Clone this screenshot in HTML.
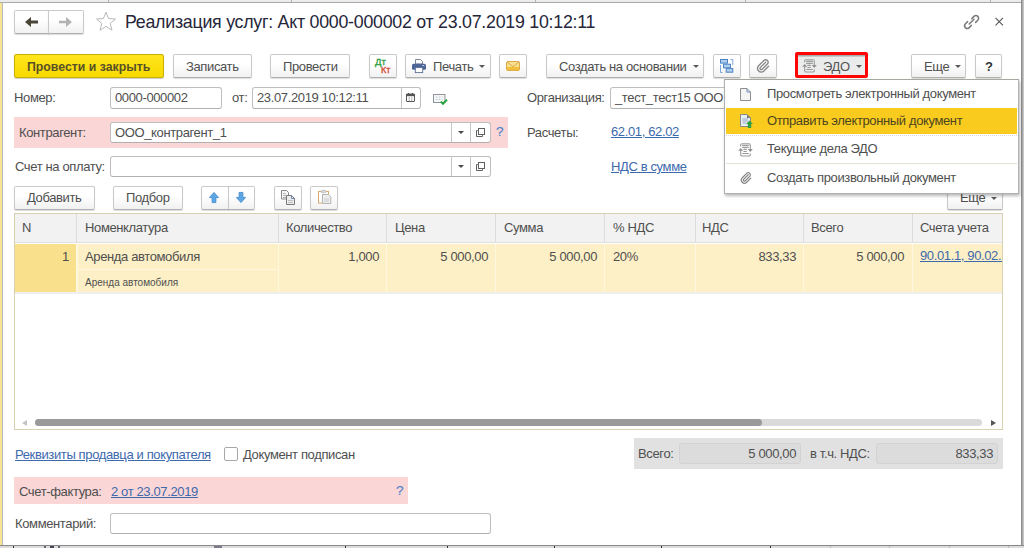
<!DOCTYPE html>
<html><head><meta charset="utf-8">
<style>
*{box-sizing:border-box;margin:0;padding:0}
html,body{width:1024px;height:548px;overflow:hidden;background:#fff}
body{position:relative;font-family:"Liberation Sans",sans-serif;font-size:13px;letter-spacing:-0.37px;color:#4f4f4f}
.a{position:absolute}
svg.a{overflow:visible}
.t{position:absolute;line-height:14px;white-space:nowrap}
.btn{position:absolute;height:23px;border:1px solid #c9c9c9;border-bottom-color:#b0b0b0;border-radius:2px;background:linear-gradient(#ffffff 40%,#f1f1f1);box-shadow:0 1px 1px rgba(0,0,0,.14)}
.inp{position:absolute;height:21px;border:1px solid #bfbfbf;border-bottom-color:#b0b0b0;border-radius:3px;background:#fff}
.lnk{color:#3d69ad;text-decoration:underline;text-underline-offset:1px}
.vd{position:absolute;width:1px;background:#dcdcdc}
.rd{position:absolute;width:1px;top:244px;height:48px;background:#fff7de}
</style></head><body>
<!-- top band -->
<div class="a" style="left:0;top:0;width:1024px;height:3px;background:#ececec;border-bottom:1px solid #a9a9a9"></div>
<div class="a" style="left:108px;top:0;width:1px;height:2px;background:#b4b4b4"></div>
<div class="a" style="left:291px;top:0;width:1px;height:2px;background:#b4b4b4"></div>
<div class="a" style="left:535px;top:0;width:1px;height:2px;background:#b4b4b4"></div>
<div class="a" style="left:745px;top:0;width:1px;height:2px;background:#b4b4b4"></div>
<div class="a" style="left:990px;top:0;width:1px;height:2px;background:#b4b4b4"></div>
<!-- left strip -->
<div class="a" style="left:0;top:3px;width:2px;height:542px;background:#f8e495"></div>
<div class="a" style="left:2px;top:2px;width:1px;height:543px;background:#b8b8b8"></div>
<!-- right border -->
<div class="a" style="left:1021px;top:0;width:1px;height:548px;background:#8e8e8e"></div>
<div class="a" style="left:1022px;top:0;width:1px;height:548px;background:#a9a9a9"></div>
<div class="a" style="left:1023px;top:0;width:1px;height:548px;background:#c6c6c6"></div>
<!-- bottom border -->
<div class="a" style="left:0;top:545px;width:1024px;height:1px;background:#8a8a8a"></div>
<div class="a" style="left:0;top:546px;width:1024px;height:2px;background:#dcdcdc"></div>
<div class="a" style="left:13px;top:546px;width:1px;height:2px;background:#333"></div>
<div class="a" style="left:44px;top:546px;width:2px;height:2px;background:#667"></div><div class="a" style="left:50px;top:546px;width:4px;height:2px;background:#445"></div><div class="a" style="left:58px;top:546px;width:2px;height:2px;background:#667"></div>
<div class="a" style="left:214px;top:546px;width:8px;height:2px;background:#7a7a88"></div>
<div class="a" style="left:345px;top:546px;width:1px;height:2px;background:#333"></div>
<div class="a" style="left:447px;top:546px;width:1px;height:2px;background:#333"></div>
<div class="a" style="left:554px;top:546px;width:1px;height:2px;background:#333"></div>
<div class="a" style="left:661px;top:546px;width:1px;height:2px;background:#333"></div>
<div class="a" style="left:770px;top:546px;width:1px;height:2px;background:#333"></div>
<div class="a" style="left:830px;top:546px;width:1px;height:2px;background:#bbb"></div>
<div class="a" style="left:889px;top:546px;width:1px;height:2px;background:#bbb"></div>
<div class="a" style="left:949px;top:546px;width:1px;height:2px;background:#bbb"></div>
<div class="a" style="left:1008px;top:546px;width:1px;height:2px;background:#bbb"></div>

<!-- nav buttons -->
<div class="btn" style="left:14px;top:10px;width:35px;height:24px;border-radius:2px 0 0 2px"></div>
<div class="btn" style="left:48px;top:10px;width:36px;height:24px;border-radius:0 2px 2px 0"></div>
<svg class="a" style="left:25px;top:17px" width="13" height="10" viewBox="0 0 13 10"><path d="M0 5 L6 0 V3.6 H13 V6.4 H6 V10 Z" fill="#4a4538"/></svg>
<svg class="a" style="left:59px;top:17px" width="13" height="10" viewBox="0 0 13 10"><path d="M13 5 L7 0 V3.8 H0 V6.2 H7 V10 Z" fill="#b3b3b3"/></svg>
<!-- star -->
<svg class="a" style="left:95px;top:11px" width="22" height="21" viewBox="0 0 22 21"><path d="M11 1.2 L13.6 7.6 L20.5 8 L15.2 12.4 L17 19.2 L11 15.4 L5 19.2 L6.8 12.4 L1.5 8 L8.4 7.6 Z" fill="none" stroke="#b8b8b8" stroke-width="1"/></svg>
<div class="t" style="left:125px;top:11.6px;font-size:17.8px;letter-spacing:-0.25px;line-height:20px;color:#26263a">Реализация услуг: Акт 0000-000002 от 23.07.2019 10:12:11</div>
<!-- link & close -->
<svg class="a" style="left:963px;top:14px" width="18" height="16" viewBox="0 0 18 16"><g fill="none" stroke="#7a7a7a" stroke-width="1.5" stroke-linecap="round"><path d="M8.8 4.6 L11 2.4 A2.6 2.6 0 0 1 14.8 6.2 L12.6 8.4"/><path d="M8.4 11.4 L6.2 13.6 A2.6 2.6 0 0 1 2.4 9.8 L4.6 7.6"/><path d="M6.2 10 L11 5.2"/></g></svg>
<svg class="a" style="left:995px;top:17px" width="9" height="9" viewBox="0 0 9 9"><path d="M0.5 0.8 L8 8.3 M8 0.8 L0.5 8.3" stroke="#555" stroke-width="1.1"/></svg>

<!-- toolbar -->
<div class="a" style="left:14px;top:54px;width:150px;height:24px;border:1px solid #cbb000;border-radius:2px;background:linear-gradient(#ffe51c,#f8da00);box-shadow:0 1px 1px rgba(0,0,0,.2)"></div>
<div class="t" style="left:27px;top:60px;font-weight:bold;color:#585026;font-size:12.3px;letter-spacing:normal">Провести и закрыть</div>
<div class="btn" style="left:173px;top:54px;width:79px;height:24px"></div>
<div class="t" style="left:186px;top:60px">Записать</div>
<div class="btn" style="left:270px;top:54px;width:80px;height:24px"></div>
<div class="t" style="left:283px;top:60px">Провести</div>
<div class="btn" style="left:369px;top:54px;width:28px;height:24px"></div>
<div class="t" style="left:375px;top:57px;font-size:9.5px;letter-spacing:normal;line-height:10px;color:#2a9d3a;-webkit-text-stroke:0.3px #2a9d3a">Дт</div>
<div class="t" style="left:381px;top:65px;font-size:9px;letter-spacing:normal;line-height:10px;color:#d0452c;-webkit-text-stroke:0.3px #d0452c">Кт</div>
<div class="btn" style="left:405px;top:54px;width:86px;height:24px"></div>
<svg class="a" style="left:412px;top:59px" width="14" height="14" viewBox="0 0 14 14"><path d="M3.5 0.5 H8.5 L10.5 2.5 V5 H3.5 Z" fill="#fff" stroke="#707a8a" stroke-width="0.9"/><rect x="0" y="4.8" width="14" height="6" rx="1.6" fill="#4d6696"/><rect x="3.3" y="8.6" width="7.4" height="5" fill="#fff" stroke="#5a6e95" stroke-width="0.9"/><rect x="10.2" y="6" width="2" height="1" fill="#b9c6e0"/></svg>
<div class="t" style="left:433px;top:60px">Печать</div>
<svg class="a" style="left:479px;top:65px" width="6" height="3"><path d="M0 0 H6 L3 3 Z" fill="#5a5a5a"/></svg>
<div class="btn" style="left:499px;top:54px;width:28px;height:24px"></div>
<svg class="a" style="left:506px;top:61px" width="14" height="10" viewBox="0 0 14 10"><rect x="0.5" y="0.5" width="13" height="9" rx="1.5" fill="#f9e08e" stroke="#dfa84a"/><rect x="1" y="6" width="12" height="3" fill="#f0c038"/><path d="M1 1 L7 5.8 L13 1" fill="none" stroke="#d9a048" stroke-width="0.9"/></svg>
<div class="btn" style="left:546px;top:54px;width:158px;height:24px"></div>
<div class="t" style="left:559px;top:60px">Создать на основании</div>
<svg class="a" style="left:693px;top:65px" width="6" height="3"><path d="M0 0 H6 L3 3 Z" fill="#5a5a5a"/></svg>
<div class="btn" style="left:713px;top:54px;width:28px;height:24px"></div>
<svg class="a" style="left:720px;top:59px" width="14" height="14" viewBox="0 0 14 14"><g fill="#b3cff0" stroke="#4a82c4" stroke-width="1"><rect x="0.5" y="0.5" width="7" height="3.6"/><rect x="3.5" y="5.2" width="7" height="3.6"/><rect x="6.2" y="9.6" width="6.6" height="3.6"/></g><path d="M0.5 6 V13.5 H2.5 M10.5 0.5 H12.8 V6" fill="none" stroke="#6d9bd6" stroke-width="0.9"/></svg>
<div class="btn" style="left:749px;top:54px;width:28px;height:24px"></div>
<svg class="a" style="left:756px;top:59px" width="14" height="14" viewBox="0 0 14 14"><path d="M9.6 3.2 L4.2 8.6 A1.3 1.3 0 0 0 6 10.4 L11.6 4.8 A2.5 2.5 0 0 0 8.1 1.3 L2.4 7 A3.7 3.7 0 0 0 7.6 12.2 L12.6 7.2" fill="none" stroke="#858585" stroke-width="1.3" stroke-linecap="round"/></svg>
<!-- EDO -->
<div class="a" style="left:795px;top:52px;width:73px;height:26px;border:3px solid #ff0606;border-radius:2px;background:linear-gradient(#e9eaea,#ededed);box-shadow:inset 0 1px 0 #a9abab,inset 0 2px 0 #c8caca"></div>
<svg class="a" style="left:802px;top:59px" width="15" height="14" viewBox="0 0 15 14"><g fill="none" stroke="#9a9a9a" stroke-width="1.1"><path d="M2.7 3.4 V2 A1.3 1.3 0 0 1 4 0.7 H11 A1.3 1.3 0 0 1 12.3 2 V6.3"/><path d="M12.3 10.4 V11.7 A1.3 1.3 0 0 1 11 13 H4 A1.3 1.3 0 0 1 2.7 11.7 V7.6"/><path d="M4.2 2.4 H10.8 M4.2 4.4 H10.8 M5.4 6.4 H8.8 M5.4 8.5 H8.8 M4.2 10.5 H10.8"/></g><path d="M0.2 7.8 L2.7 5 L5.2 7.8 Z M9.8 6.1 L12.3 8.9 L14.8 6.1 Z" fill="#8e8e8e"/></svg>
<div class="t" style="left:823px;top:60px;color:#555">ЭДО</div>
<svg class="a" style="left:856px;top:65px" width="6" height="3"><path d="M0 0 H6 L3 3 Z" fill="#5a5a5a"/></svg>
<div class="btn" style="left:911px;top:54px;width:55px;height:24px"></div>
<div class="t" style="left:924px;top:60px">Еще</div>
<svg class="a" style="left:955px;top:65px" width="6" height="3"><path d="M0 0 H6 L3 3 Z" fill="#5a5a5a"/></svg>
<div class="btn" style="left:975px;top:54px;width:27px;height:24px"></div>
<div class="t" style="left:985px;top:60px;font-weight:bold;color:#333;font-size:13px;letter-spacing:normal">?</div>

<!-- row Номер -->
<div class="t" style="left:14px;top:91px">Номер:</div>
<div class="inp" style="left:110px;top:87px;width:112px;height:22px"></div>
<div class="t" style="left:115px;top:91px">0000-000002</div>
<div class="t" style="left:232px;top:91px">от:</div>
<div class="inp" style="left:252px;top:87px;width:169px;height:22px"></div>
<div class="a" style="left:401px;top:88px;width:1px;height:20px;background:#c4c4c4"></div>
<svg class="a" style="left:406px;top:93px" width="9" height="9" viewBox="0 0 9 9"><rect x="0.5" y="1" width="8" height="7.5" rx="0.5" fill="#fff" stroke="#555"/><rect x="0" y="1" width="9" height="2.2" fill="#555"/><path d="M2.5 0 V1.5 M6.5 0 V1.5" stroke="#555"/><path d="M3.2 4 V8 M5.8 4 V8" stroke="#9a9a9a" stroke-width="0.8"/></svg>
<div class="t" style="left:257px;top:91px">23.07.2019 10:12:11</div>
<svg class="a" style="left:433px;top:94px" width="15" height="11" viewBox="0 0 15 11"><rect x="0.5" y="0.5" width="11.5" height="8" fill="#f6f6f6" stroke="#8f959b"/><path d="M3 3 H9.5 M3 5.5 H9.5" stroke="#b8c8d8" stroke-dasharray="1.5 1.5"/><path d="M7.8 7.6 L10 9.8 L14 5.6" fill="none" stroke="#25a540" stroke-width="2"/></svg>
<div class="t" style="left:527px;top:91px">Организация:</div>
<div class="inp" style="left:610px;top:87px;width:140px;height:22px"></div>
<div class="t" style="left:615px;top:91px">_тест_тест15 ООО</div>

<!-- Контрагент -->
<div class="a" style="left:14px;top:117px;width:494px;height:31px;background:#fad6d6"></div>
<div class="t" style="left:19px;top:126px">Контрагент:</div>
<div class="inp" style="left:110px;top:122px;width:381px"></div>
<div class="a" style="left:451px;top:123px;width:1px;height:19px;background:#c4c4c4"></div>
<div class="a" style="left:470px;top:123px;width:1px;height:19px;background:#c4c4c4"></div>
<svg class="a" style="left:458px;top:131px" width="6" height="3"><path d="M0 0 H6 L3 3 Z" fill="#4a4a4a"/></svg>
<svg class="a" style="left:476px;top:128px" width="9" height="9" viewBox="0 0 9 9"><rect x="2.5" y="0.5" width="6" height="6" fill="none" stroke="#606060"/><path d="M1.8 2.5 H0.5 V8.5 H6.5 V7.2" fill="none" stroke="#606060"/></svg>
<div class="t" style="left:115px;top:126px">ООО_контрагент_1</div>
<div class="t" style="left:496px;top:125px;color:#4a82c8;font-size:13.5px;letter-spacing:normal;-webkit-text-stroke:0.15px #4a82c8">?</div>
<div class="t" style="left:527px;top:126px">Расчеты:</div>
<div class="t lnk" style="left:611px;top:125px">62.01, 62.02</div>

<!-- Счет на оплату -->
<div class="t" style="left:15px;top:160px">Счет на оплату:</div>
<div class="inp" style="left:110px;top:156px;width:381px"></div>
<div class="a" style="left:451px;top:157px;width:1px;height:19px;background:#c4c4c4"></div>
<div class="a" style="left:470px;top:157px;width:1px;height:19px;background:#c4c4c4"></div>
<svg class="a" style="left:458px;top:165px" width="6" height="3"><path d="M0 0 H6 L3 3 Z" fill="#4a4a4a"/></svg>
<svg class="a" style="left:476px;top:162px" width="9" height="9" viewBox="0 0 9 9"><rect x="2.5" y="0.5" width="6" height="6" fill="none" stroke="#606060"/><path d="M1.8 2.5 H0.5 V8.5 H6.5 V7.2" fill="none" stroke="#606060"/></svg>
<div class="t lnk" style="left:611px;top:160px">НДС в сумме</div>

<!-- table buttons -->
<div class="btn" style="left:14px;top:186px;width:81px;height:24px"></div>
<div class="t" style="left:27px;top:191px">Добавить</div>
<div class="btn" style="left:113px;top:186px;width:70px;height:24px"></div>
<div class="t" style="left:126px;top:191px">Подбор</div>
<div class="btn" style="left:201px;top:186px;width:28px;height:24px;border-radius:2px 0 0 2px"></div>
<div class="btn" style="left:228px;top:186px;width:27px;height:24px;border-radius:0 2px 2px 0"></div>
<svg class="a" style="left:209px;top:192px" width="10" height="11" viewBox="0 0 10 11"><path d="M5 0.4 L9.6 5.6 H6.9 V10.6 H3.1 V5.6 H0.4 Z" fill="#5ca6e4" stroke="#3f86cc" stroke-width="0.8" stroke-linejoin="round"/></svg>
<svg class="a" style="left:236px;top:192px" width="10" height="11" viewBox="0 0 10 11"><path d="M5 10.6 L9.6 5.4 H6.9 V0.4 H3.1 V5.4 H0.4 Z" fill="#5ca6e4" stroke="#3f86cc" stroke-width="0.8" stroke-linejoin="round"/></svg>
<div class="btn" style="left:274px;top:186px;width:28px;height:24px"></div>
<svg class="a" style="left:280px;top:190px" width="16" height="15" viewBox="0 0 16 15"><path d="M1.5 0.5 H6.5 L8.5 2.5 V9 H1.5 Z" fill="#f7f7f7" stroke="#8a8a8a"/><path d="M3 3.5 H5.5 M3 5.5 H6.5 M3 7.5 H6" stroke="#b0b0b0"/><path d="M6.5 5.5 H11.5 L14.5 8.5 V14.5 H6.5 Z" fill="#ededed" stroke="#7a7a7a"/><path d="M11.5 5.5 V8.5 H14.5" fill="none" stroke="#6a8ab8"/><path d="M8 10.5 H13 M8 12.5 H13" stroke="#c0c0c0"/></svg>
<div class="btn" style="left:310px;top:186px;width:28px;height:24px"></div>
<svg class="a" style="left:318px;top:190px" width="14" height="15" viewBox="0 0 14 15"><rect x="0.5" y="1.5" width="10" height="11.5" fill="#fff" stroke="#d9a86c"/><rect x="3" y="0.3" width="5" height="2.5" rx="1" fill="#d8d8d8" stroke="#b0b0b0" stroke-width="0.6"/><path d="M4.5 4.5 H10.5 L12.8 6.8 V13.5 H4.5 Z" fill="#ededed" stroke="#b5b5b5"/><path d="M6 9 H11 M6 11 H11" stroke="#ccc"/></svg>
<div class="btn" style="left:947px;top:186px;width:56px;height:24px"></div>
<div class="t" style="left:960px;top:191px">Еще</div>
<svg class="a" style="left:991px;top:197px" width="6" height="3"><path d="M0 0 H6 L3 3 Z" fill="#5a5a5a"/></svg>

<!-- table -->
<div class="a" style="left:14px;top:213px;width:989px;height:217px;border:1px solid #d8d0ae;background:#fff"></div>
<div class="a" style="left:15px;top:214px;width:987px;height:28px;background:#f2f2f2"></div>
<div class="a" style="left:15px;top:242px;width:987px;height:1px;background:#dfdfdf"></div>
<div class="vd" style="left:76px;top:214px;height:28px"></div>
<div class="vd" style="left:278px;top:214px;height:28px"></div>
<div class="vd" style="left:386px;top:214px;height:28px"></div>
<div class="vd" style="left:495px;top:214px;height:28px"></div>
<div class="vd" style="left:604px;top:214px;height:28px"></div>
<div class="vd" style="left:695px;top:214px;height:28px"></div>
<div class="vd" style="left:803px;top:214px;height:28px"></div>
<div class="vd" style="left:912px;top:214px;height:28px"></div>
<div class="t" style="left:22px;top:221px">N</div>
<div class="t" style="left:85px;top:221px">Номенклатура</div>
<div class="t" style="left:286px;top:221px">Количество</div>
<div class="t" style="left:395px;top:221px">Цена</div>
<div class="t" style="left:504px;top:221px">Сумма</div>
<div class="t" style="left:613px;top:221px">% НДС</div>
<div class="t" style="left:702px;top:221px">НДС</div>
<div class="t" style="left:811px;top:221px">Всего</div>
<div class="t" style="left:920px;top:221px">Счета учета</div>
<!-- row -->
<div class="a" style="left:15px;top:244px;width:987px;height:48px;background:#fdf0c6"></div>
<div class="a" style="left:15px;top:244px;width:61px;height:48px;background:#f9e08c"></div>
<div class="rd" style="left:76px;width:2px"></div>
<div class="rd" style="left:278px"></div>
<div class="rd" style="left:386px"></div>
<div class="rd" style="left:495px"></div>
<div class="rd" style="left:604px"></div>
<div class="rd" style="left:695px"></div>
<div class="rd" style="left:803px"></div>
<div class="rd" style="left:912px"></div>
<div class="a" style="left:78px;top:269px;width:200px;height:1px;background:#fff7de"></div>
<div class="a" style="left:15px;top:292px;width:987px;height:2px;background:#efefef"></div>
<div class="t" style="left:62px;top:250px">1</div>
<div class="t" style="left:85px;top:250px">Аренда автомобиля</div>
<div class="t" style="left:85px;top:277px;font-size:10px;letter-spacing:normal;line-height:12px">Аренда автомобиля</div>
<div class="t" style="left:318px;top:250px;width:61px;text-align:right">1,000</div>
<div class="t" style="left:387px;top:250px;width:101px;text-align:right">5 000,00</div>
<div class="t" style="left:496px;top:250px;width:101px;text-align:right">5 000,00</div>
<div class="t" style="left:613px;top:250px">20%</div>
<div class="t" style="left:696px;top:250px;width:100px;text-align:right">833,33</div>
<div class="t" style="left:804px;top:250px;width:100px;text-align:right">5 000,00</div>
<div class="a" style="left:920px;top:244px;width:82px;height:24px;overflow:hidden"><div class="t lnk" style="left:0;top:5px">90.01.1, 90.02.1</div></div>
<!-- scrollbar -->
<svg class="a" style="left:22px;top:420px" width="5" height="6"><path d="M5 0 V6 L0 3 Z" fill="#c4c4c4"/></svg>
<div class="a" style="left:35px;top:419px;width:947px;height:7px;border-radius:4px;background:#dadada"></div>
<div class="a" style="left:35px;top:419px;width:727px;height:7px;border-radius:4px;background:#9a9a9a"></div>
<svg class="a" style="left:991px;top:420px" width="5" height="6"><path d="M0 0 V6 L5 3 Z" fill="#555"/></svg>

<!-- bottom -->
<div class="t lnk" style="left:15px;top:448px">Реквизиты продавца и покупателя</div>
<div class="a" style="left:224px;top:447px;width:14px;height:14px;border:1px solid #a8a8a8;border-radius:2px;background:#fff"></div>
<div class="t" style="left:243px;top:448px">Документ подписан</div>
<div class="a" style="left:634px;top:438px;width:369px;height:31px;background:#e1e1e1"></div>
<div class="t" style="left:638px;top:447px">Всего:</div>
<div class="a" style="left:679px;top:443px;width:122px;height:21px;border:1px solid #d2d2d2;border-radius:3px;background:#dcdcdc"></div>
<div class="t" style="left:680px;top:447px;width:116px;text-align:right">5 000,00</div>
<div class="t" style="left:810px;top:447px">в т.ч. НДС:</div>
<div class="a" style="left:876px;top:443px;width:122px;height:21px;border:1px solid #d2d2d2;border-radius:3px;background:#dcdcdc"></div>
<div class="t" style="left:877px;top:447px;width:116px;text-align:right">833,33</div>

<div class="a" style="left:14px;top:477px;width:394px;height:27px;background:#fad6d6"></div>
<div class="t" style="left:19px;top:485px">Счет-фактура:</div>
<div class="t lnk" style="left:111px;top:485px">2 от 23.07.2019</div>
<div class="t" style="left:396px;top:484px;color:#4a82c8;font-size:13.5px;letter-spacing:normal;-webkit-text-stroke:0.15px #4a82c8">?</div>

<div class="t" style="left:15px;top:517px">Комментарий:</div>
<div class="inp" style="left:110px;top:513px;width:381px"></div>

<!-- dropdown menu -->
<div class="a" style="left:724px;top:79px;width:295px;height:115px;border:1px solid #b0b0b0;border-top-color:#a8a8a0;background:#fff;box-shadow:1px 2px 3px rgba(0,0,0,.28)"></div>
<svg class="a" style="left:740px;top:88px" width="11" height="13" viewBox="0 0 11 13"><path d="M0.5 0.5 H7 L10.5 4 V12.5 H0.5 Z" fill="#f4f4f4" stroke="#8e8e8e"/><path d="M7 0.5 V4 H10.5" fill="none" stroke="#6a8ab8"/></svg>
<div class="t" style="left:767px;top:87px">Просмотреть электронный документ</div>
<div class="a" style="left:726px;top:108px;width:291px;height:26px;background:#f9cb1f"></div>
<svg class="a" style="left:740px;top:114px" width="13" height="14" viewBox="0 0 13 14"><path d="M0.5 0.5 H7 L10.5 4 V12.5 H0.5 Z" fill="#e6eef6" stroke="#8a8a8a"/><path d="M7 0.5 L10.5 4 H7 Z" fill="#777"/><path d="M2.5 5 H8 M2.5 7 H8 M2.5 9 H6" stroke="#9aaac0"/><path d="M9.5 6.5 L13 10 H11.2 V14 H7.8 V10 H6 Z" fill="#2ea043"/></svg>
<div class="t" style="left:767px;top:114px;color:#4d4520">Отправить электронный документ</div>
<div class="a" style="left:726px;top:135px;width:291px;height:1px;border-top:1px dotted #d8d8d8"></div>
<svg class="a" style="left:738px;top:143px" width="15" height="14" viewBox="0 0 15 14"><g fill="none" stroke="#9a9a9a" stroke-width="1.1"><path d="M2.7 3.4 V2 A1.3 1.3 0 0 1 4 0.7 H11 A1.3 1.3 0 0 1 12.3 2 V6.3"/><path d="M12.3 10.4 V11.7 A1.3 1.3 0 0 1 11 13 H4 A1.3 1.3 0 0 1 2.7 11.7 V7.6"/><path d="M4.2 2.4 H10.8 M4.2 4.4 H10.8 M5.4 6.4 H8.8 M5.4 8.5 H8.8 M4.2 10.5 H10.8"/></g><path d="M0.2 7.8 L2.7 5 L5.2 7.8 Z M9.8 6.1 L12.3 8.9 L14.8 6.1 Z" fill="#8e8e8e"/></svg>
<div class="t" style="left:767px;top:142px">Текущие дела ЭДО</div>
<div class="a" style="left:726px;top:163px;width:291px;height:1px;background:#e6e2d2"></div>
<svg class="a" style="left:740px;top:172px" width="12" height="12" viewBox="0 0 14 14"><path d="M9.6 3.2 L4.2 8.6 A1.3 1.3 0 0 0 6 10.4 L11.6 4.8 A2.5 2.5 0 0 0 8.1 1.3 L2.4 7 A3.7 3.7 0 0 0 7.6 12.2 L12.6 7.2" fill="none" stroke="#858585" stroke-width="1.4" stroke-linecap="round"/></svg>
<div class="t" style="left:767px;top:171px">Создать произвольный документ</div>
</body></html>
